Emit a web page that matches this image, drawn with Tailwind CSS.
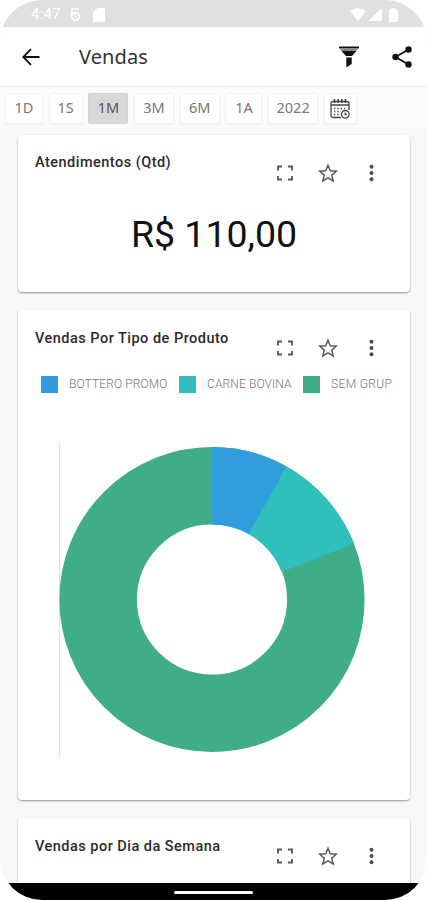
<!DOCTYPE html>
<html lang="pt-BR">
<head>
    <meta charset="utf-8"/>
    <meta content="width=device-width, initial-scale=1.0" name="viewport"/>
    <title>Vendas</title>
    <script src="https://cdn.jsdelivr.net/npm/@tailwindcss/browser@4"></script>
</head>
<body class="bg-white font-['Roboto',sans-serif]">
    <!-- Shared icons -->
    <svg class="hidden">
        <symbol id="card-icons" viewBox="0 0 104 24">
            <g fill="none" stroke="#5a5a5a" stroke-width="1.900">
                <path d="M3 9.500V5.500H7M13 5.500h4v4M17 15v3.500H13M7 18.500H3V15"/>
                <path stroke-width="1.500" d="M53 4.200l2.300 5.500 6 .5-4.500 3.900 1.400 5.800-5.200-3.100-5.200 3.100 1.400-5.800-4.500-3.900 6-.5z"/>
            </g>
            <g fill="#4d4d4d">
                <circle cx="96.500" cy="5.700" r="2"/>
                <circle cx="96.500" cy="12" r="2"/>
                <circle cx="96.500" cy="18.300" r="2"/>
            </g>
        </symbol>
    </svg>

    <div class="w-[427px] h-[900px] rounded-[42px] overflow-hidden bg-[#f8f8f8] flex flex-col">
        <!-- Status bar -->
        <div class="h-[27px] shrink-0 bg-[#e0e0e0] flex items-center justify-between pl-[31px] pr-[29px] text-white">
            <div class="flex items-center pt-0.5">
                <span class="text-[15px] leading-none w-[38px] tracking-[0.2px]">4:47</span>
                <svg class="w-3 h-[15px]" viewBox="0 0 12 15" fill="none" stroke="currentColor" stroke-width="1.700">
                    <path d="M10 2H3v4.500h5M3.500 5.500L1.500 8"/>
                    <circle cx="6.500" cy="9.500" r="3.800"/>
                    <path d="M6.500 8v3"/>
                </svg>
                <svg class="w-3 h-[14px] ml-3" viewBox="0 0 12 14" fill="currentColor"><path d="M4.500 0H11q1 0 1 1v12q0 1-1 1H1q-1 0-1-1V4.500z"/></svg>
            </div>
            <div class="flex items-center pt-0.5">
                <svg class="w-4 h-[13px]" viewBox="0 0 16 13" fill="currentColor"><path d="M0 3Q8-2.500 16 3L8 13z"/></svg>
                <svg class="w-[14px] h-[13px] ml-0.5" viewBox="0 0 14 13" fill="currentColor"><path d="M14 0v13H0z"/></svg>
                <svg class="w-[9px] h-[14px] ml-[7px]" viewBox="0 0 9 14" fill="currentColor"><path d="M2.500 0h4v1.500H8q1 0 1 1V13q0 1-1 1H1q-1 0-1-1V2.500q0-1 1-1h1.500z"/></svg>
            </div>
        </div>

        <!-- App bar -->
        <header class="h-[60px] shrink-0 bg-white border-b border-[#f0f0f0] flex items-center pl-[22px] pr-[15px]">
            <svg class="w-[18px] h-[18px]" viewBox="0 0 18 18" fill="none" stroke="#111" stroke-width="1.800"><path d="M17.500 9H2M9 1.200L1.300 9 9 16.800"/></svg>
            <h1 class="ml-[39px] font-['Noto_Sans'] text-[20px] tracking-[0.1px] text-[#333]">Vendas</h1>
            <svg class="w-5 h-[22px] ml-auto" viewBox="0 0 20 22" fill="#111">
                <path d="M0 .5h20v2H0z"/>
                <path fill="#888" d="M1 2.500h18L17.500 5h-15z"/>
                <path d="M2.500 5h15L13 10H7zM7.300 11.500h5.400V18l-5.400 3.500z"/>
            </svg>
            <svg class="w-5 h-[22px] ml-[33px]" viewBox="0 0 20 22" fill="#111">
                <path d="M16.500 3.500L3.500 11l13 7.500" fill="none" stroke="#111" stroke-width="1.700"/>
                <circle cx="16.500" cy="3.500" r="3.200"/>
                <circle cx="3.500" cy="11" r="3.200"/>
                <circle cx="16.500" cy="18.500" r="3.200"/>
            </svg>
        </header>

        <!-- Period filter -->
        <div class="h-[41px] shrink-0 bg-[#fcfcfc] flex items-start pt-1.5 pl-[5px] gap-[5.700px] font-['Noto_Sans'] text-[14.500px] text-[#777]">
            <button class="w-[38px] h-[31px] pb-0.5 bg-white border border-[#f2f2f2] rounded-xs shadow-xs">1D</button>
            <button class="w-[34px] h-[31px] pb-0.5 bg-white border border-[#f2f2f2] rounded-xs shadow-xs">1S</button>
            <button class="w-[40px] h-[31px] pb-0.5 bg-[#d8d8d8] border border-[#d2d2d2] rounded-xs text-[#555]">1M</button>
            <button class="w-[40px] h-[31px] pb-0.5 bg-white border border-[#f2f2f2] rounded-xs shadow-xs">3M</button>
            <button class="w-[40px] h-[31px] pb-0.5 bg-white border border-[#f2f2f2] rounded-xs shadow-xs">6M</button>
            <button class="w-[37px] h-[31px] pb-0.5 bg-white border border-[#f2f2f2] rounded-xs shadow-xs">1A</button>
            <button class="w-[50px] h-[31px] pb-0.5 bg-white border border-[#f2f2f2] rounded-xs shadow-xs">2022</button>
            <button class="w-[33px] h-[31px] bg-white border border-[#f2f2f2] rounded-xs shadow-xs flex items-center justify-center">
                <svg class="w-5 h-5" viewBox="0 0 20 20" fill="none" stroke="#444" stroke-width="1.300">
                    <path d="M11 18.500H3.500q-2.500 0-2.500-2.500V4.500Q1 2.500 3 2.500h13.500q2.500 0 2.500 2V11M1 6h18"/>
                    <path d="M4.500 0v4M8.200 0v4M11.800 0v4M15.500 0v4" stroke-width="1.600"/>
                    <path d="M4 9.500h11M4 12.500h7M4 15.500h6" stroke-dasharray="1.300 2"/>
                    <circle cx="15.300" cy="15.300" r="3.800"/>
                    <path d="M15.300 13.500v2h1.500"/>
                </svg>
            </button>
        </div>

        <!-- Cards -->
        <main class="flex-1 min-h-0 overflow-hidden pt-[7px] pl-[18px] flex flex-col gap-[18px] [&>section]:shrink-0">
            <section class="h-[157px] w-[392px] bg-white rounded-[4px] shadow-[0_1px_2px_rgba(0,0,0,0.4)] flex flex-col">
                <div class="h-[50px] flex justify-between pl-[17px] pr-[31px]">
                    <h2 class="pt-[17px] text-[14.500px] leading-[22px] font-medium text-[#2b2b2b] tracking-[0.480px]">Atendimentos (Qtd)</h2>
                    <svg class="w-[104px] h-6 mt-[26px]"><use href="#card-icons"/></svg>
                </div>
                <p class="mt-[26px] text-center text-[37.500px] leading-[46px] text-[#111]">R$ 110,00</p>
            </section>

            <section class="h-[490px] w-[392px] bg-white rounded-[4px] shadow-[0_1px_2px_rgba(0,0,0,0.4)] flex flex-col">
                <div class="h-[50px] flex justify-between pl-[17px] pr-[31px]">
                    <h2 class="pt-[18px] text-[14.500px] leading-[22px] font-medium text-[#2b2b2b] tracking-[0.480px]">Vendas Por Tipo de Produto</h2>
                    <svg class="w-[104px] h-6 mt-[26px]"><use href="#card-icons"/></svg>
                </div>
                <div class="mt-[15px] ml-[23px] w-[352px] h-[18px] flex items-center whitespace-nowrap text-[12px] font-light tracking-[0.120px] text-[#777]">
                    <span class="w-[17px] h-[17px] shrink-0 bg-[#309bdc]"></span>
                    <span class="ml-[11px] w-[110px] shrink-0">BOTTERO PROMO</span>
                    <span class="w-[17px] h-[17px] shrink-0 bg-[#2ebfbd]"></span>
                    <span class="ml-[11px] w-[96px] shrink-0">CARNE BOVINA</span>
                    <span class="w-[17px] h-[17px] shrink-0 bg-[#3fae86]"></span>
                    <span class="ml-[11px] shrink-0 tracking-[0.350px]">SEM GRUP</span>
                </div>
                <svg class="mt-[50px] ml-[41px] w-[306px] h-[314px]" viewBox="59 443 306 314">
                    <path d="M59.500 443v314" stroke="#ddd"/>
                    <circle cx="212" cy="599.500" r="113.800" fill="none" stroke="#3fae86" stroke-width="77.500"/>
                    <path fill="#309edd" d="M212 447A152.500 152.500 0 0 1 286.600 466.500L248.700 534.100A75 75 0 0 0 212 524.500z"/>
                    <path fill="#2fc0be" d="M286.600 466.500A152.500 152.500 0 0 1 353.900 543.600L281.800 572A75 75 0 0 0 248.700 534.100z"/>
                </svg>
            </section>

            <section class="h-[157px] w-[392px] bg-white rounded-[4px] shadow-[0_1px_2px_rgba(0,0,0,0.4)] flex flex-col">
                <div class="h-[50px] flex justify-between pl-[17px] pr-[31px]">
                    <h2 class="pt-[18px] text-[14.500px] leading-[22px] font-medium text-[#2b2b2b] tracking-[0.480px]">Vendas por Dia da Semana</h2>
                    <svg class="w-[104px] h-6 mt-[26px]"><use href="#card-icons"/></svg>
                </div>
            </section>
        </main>

        <!-- Gesture bar -->
        <div class="h-[17px] shrink-0 bg-black flex justify-center pt-2">
            <div class="w-[79px] h-[3px] rounded-full bg-white"></div>
        </div>
    </div>
</body>
</html>
